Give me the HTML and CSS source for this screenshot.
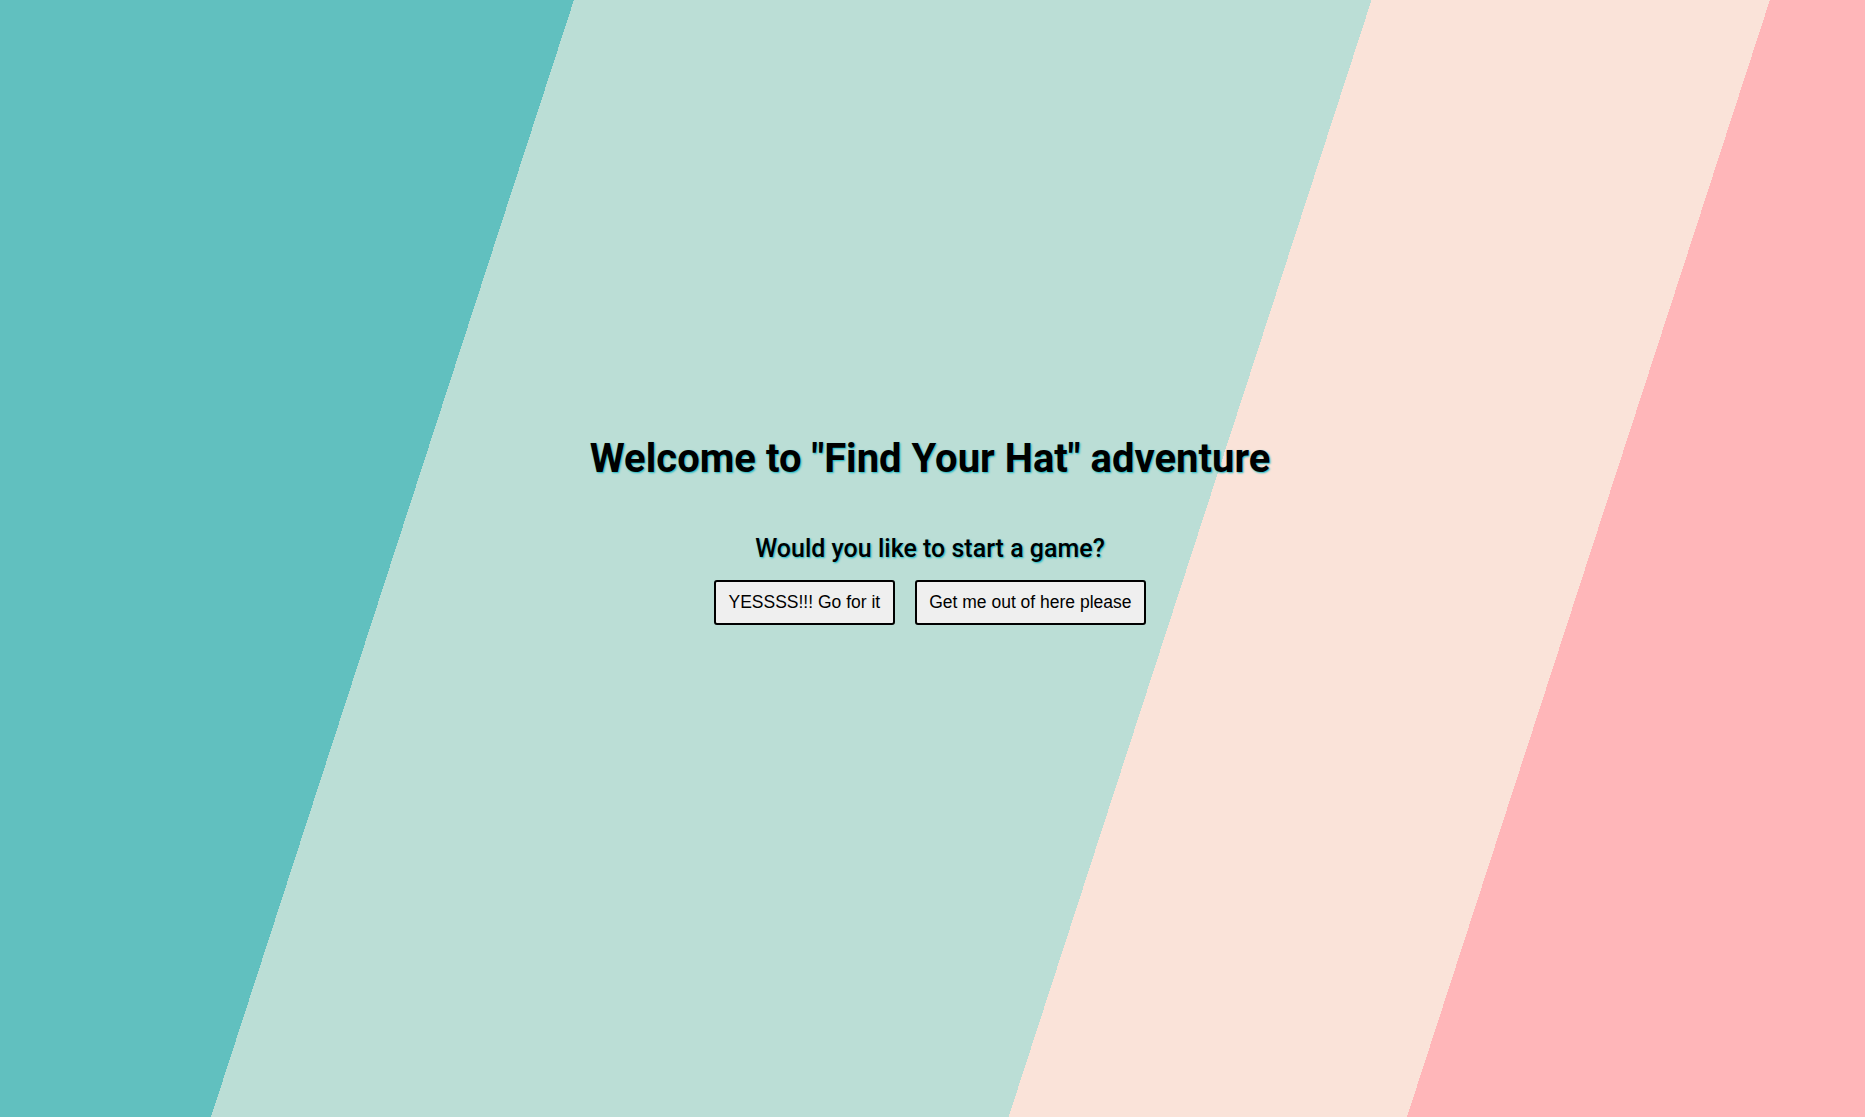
FILE: index.html
```html
<!DOCTYPE html>
<html lang="en">
<head>
<meta charset="utf-8">
<title>Find Your Hat</title>
<link rel="stylesheet" href="styles.css">
</head>
<body>
<main class="stage">
  <h1 class="title">Welcome to "Find Your Hat" adventure</h1>
  <h2 class="question">Would you like to start a game?</h2>
  <div class="actions">
    <button class="btn" type="button">YESSSS!!! Go for it</button>
    <button class="btn" type="button">Get me out of here please</button>
  </div>
</main>
</body>
</html>
```
FILE: styles.css
```css
html, body {
  margin: 0;
  padding: 0;
}
body {
  font-family: Roboto, "Liberation Sans", sans-serif;
}
.stage {
  box-sizing: border-box;
  min-height: 100vh;
  display: flex;
  flex-direction: column;
  align-items: center;
  justify-content: center;
  padding: 0 5px 58px 0;
  background: linear-gradient(108deg,
    #61c0bf 0 25.76%,
    #bbded6 25.76% 61.56%,
    #fae3d9 61.56% 79.44%,
    #ffb6b9 79.44% 100%);
}
.title {
  margin: 0;
  font-size: 40px;
  line-height: 47px;
  font-weight: 700;
  color: #000;
  text-shadow: 1px 1px 2px #12b9c6;
}
.question {
  margin: 52px 0 17px;
  font-size: 25px;
  line-height: 29px;
  font-weight: 500;
  color: #000;
  text-shadow: 1px 1px 2px #12b9c6;
}
.actions {
  display: flex;
  gap: 20px;
}
.btn {
  box-sizing: border-box;
  height: 45px;
  padding: 0 12.5px;
  font-family: "Liberation Sans", Arial, sans-serif;
  font-size: 17.5px;
  color: #000;
  background: #efefef;
  border: 2px solid #000;
  border-radius: 3px;
}
```
